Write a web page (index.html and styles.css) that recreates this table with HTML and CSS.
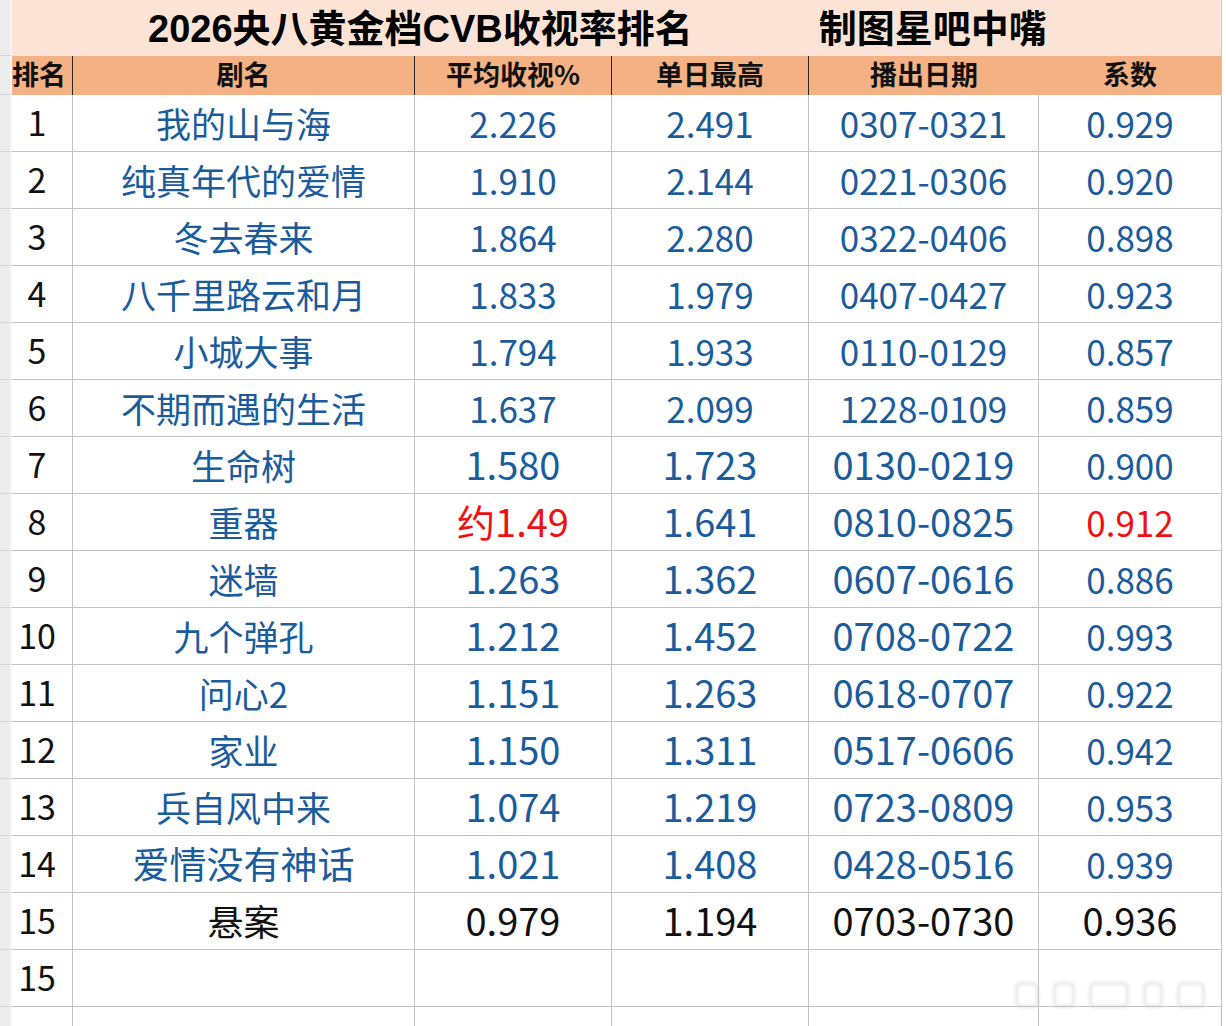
FILE: index.html
```html
<!DOCTYPE html>
<html lang="zh">
<head>
<meta charset="utf-8">
<link rel="stylesheet" href="styles.css">
</head>
<body>
<div class="sheet">
  <div class="gut"></div>
  <div class="title"><span class="t1">2026央八黄金档CVB收视率排名</span><span class="t2">制图星吧中嘴</span></div>

  <div class="gut"></div>
  <div class="hd dark first">排名</div><div class="hd dark">剧名</div><div class="hd dark">平均收视%</div><div class="hd dark">单日最高</div><div class="hd">播出日期</div><div class="hd last">系数</div>

  <div class="gut"></div>
  <div class="c rk">1</div><div class="c b nm">我的山与海</div><div class="c b">2.226</div><div class="c b">2.491</div><div class="c b">0307-0321</div><div class="c b">0.929</div>
  <div class="gut"></div>
  <div class="c rk">2</div><div class="c b nm">纯真年代的爱情</div><div class="c b">1.910</div><div class="c b">2.144</div><div class="c b">0221-0306</div><div class="c b">0.920</div>
  <div class="gut"></div>
  <div class="c rk">3</div><div class="c b nm">冬去春来</div><div class="c b">1.864</div><div class="c b">2.280</div><div class="c b">0322-0406</div><div class="c b">0.898</div>
  <div class="gut"></div>
  <div class="c rk">4</div><div class="c b nm">八千里路云和月</div><div class="c b">1.833</div><div class="c b">1.979</div><div class="c b">0407-0427</div><div class="c b">0.923</div>
  <div class="gut"></div>
  <div class="c rk">5</div><div class="c b nm">小城大事</div><div class="c b">1.794</div><div class="c b">1.933</div><div class="c b">0110-0129</div><div class="c b">0.857</div>
  <div class="gut"></div>
  <div class="c rk">6</div><div class="c b nm">不期而遇的生活</div><div class="c b">1.637</div><div class="c b">2.099</div><div class="c b">1228-0109</div><div class="c b">0.859</div>
  <div class="gut"></div>
  <div class="c rk">7</div><div class="c b nm">生命树</div><div class="c b lg">1.580</div><div class="c b lg">1.723</div><div class="c b lg">0130-0219</div><div class="c b">0.900</div>
  <div class="gut"></div>
  <div class="c rk">8</div><div class="c b nm">重器</div><div class="c r lg">约1.49</div><div class="c b lg">1.641</div><div class="c b lg">0810-0825</div><div class="c r">0.912</div>
  <div class="gut"></div>
  <div class="c rk">9</div><div class="c b nm">迷墙</div><div class="c b lg">1.263</div><div class="c b lg">1.362</div><div class="c b lg">0607-0616</div><div class="c b">0.886</div>
  <div class="gut"></div>
  <div class="c rk">10</div><div class="c b nm">九个弹孔</div><div class="c b lg">1.212</div><div class="c b lg">1.452</div><div class="c b lg">0708-0722</div><div class="c b">0.993</div>
  <div class="gut"></div>
  <div class="c rk">11</div><div class="c b nm">问心2</div><div class="c b lg">1.151</div><div class="c b lg">1.263</div><div class="c b lg">0618-0707</div><div class="c b">0.922</div>
  <div class="gut"></div>
  <div class="c rk">12</div><div class="c b nm">家业</div><div class="c b lg">1.150</div><div class="c b lg">1.311</div><div class="c b lg">0517-0606</div><div class="c b">0.942</div>
  <div class="gut"></div>
  <div class="c rk">13</div><div class="c b nm">兵自风中来</div><div class="c b lg">1.074</div><div class="c b lg">1.219</div><div class="c b lg">0723-0809</div><div class="c b">0.953</div>
  <div class="gut"></div>
  <div class="c rk">14</div><div class="c b nm lgn">爱情没有神话</div><div class="c b lg">1.021</div><div class="c b lg">1.408</div><div class="c b lg">0428-0516</div><div class="c b">0.939</div>
  <div class="gut"></div>
  <div class="c rk">15</div><div class="c k nm lgn2">悬案</div><div class="c k lg">0.979</div><div class="c k lg">1.194</div><div class="c k lg">0703-0730</div><div class="c k lg">0.936</div>
  <div class="gut"></div>
  <div class="c rk">15</div><div class="c"></div><div class="c"></div><div class="c"></div><div class="c"></div><div class="c"></div>
  <div class="gut"></div>
  <div class="c"></div><div class="c"></div><div class="c"></div><div class="c"></div><div class="c"></div><div class="c"></div>
</div>
<div class="wm"><span class="w1"></span><span class="w2"></span><span class="w3"></span><span class="w4"></span><span class="w5"></span></div>
</body>
</html>
```

FILE: styles.css
```css
html, body {
  margin: 0;
  padding: 0;
  background: #ffffff;
}
body {
  width: 1226px;
  height: 1026px;
  overflow: hidden;
  position: relative;
  font-family: "Noto Sans CJK SC", "Noto Sans", sans-serif;
}
.sheet {
  display: grid;
  grid-template-columns: 12px 61px 342px 197px 197px 230px 183px;
  grid-template-rows: 56px 39px;
  grid-auto-rows: 57px;
  width: 1222px;
}
.gut {
  background: #ececec;
  border-right: 2px solid #f6f6f6;
  border-bottom: 1px solid #d4d4d4;
  box-sizing: border-box;
}
.title {
  grid-column: 2 / 8;
  background: #fbe4d6;
  border-right: 1px solid #c8c8c8;
  box-sizing: border-box;
  display: flex;
  align-items: center;
  padding-left: 136px;
  padding-bottom: 5px;
  font-family: "Liberation Sans", "Noto Sans CJK SC", sans-serif;
  font-weight: 700;
  font-size: 38px;
  color: #000;
  white-space: nowrap;
}
.t2 {
  margin-left: 126px;
}
.hd {
  background: #f4b183;
  display: flex;
  align-items: center;
  justify-content: center;
  font-weight: 700;
  font-size: 27px;
  color: #111;
  box-sizing: border-box;
  padding-bottom: 4px;
  white-space: nowrap;
}
.hd.first {
  justify-content: flex-start;
}
.hd.dark {
  border-right: 1px solid #2a2a2a;
}
.hd.last {
  border-right: 1px solid #c8c8c8;
}
.c {
  display: flex;
  align-items: center;
  justify-content: center;
  border-right: 1px solid #c2c2c2;
  border-bottom: 1px solid #c2c2c2;
  box-sizing: border-box;
  font-size: 35px;
  line-height: 1;
  padding-bottom: 2px;
  white-space: nowrap;
}
.rk {
  color: #111;
  font-size: 34px;
  padding-right: 10px;
}
.b { color: #1a5c9c; }
.r { color: #ee1111; }
.k { color: #111; }
.lg { font-size: 38px; }
.nm { font-size: 35px; }
.nm.lgn { font-size: 37px; }
.nm.lgn2 { font-size: 36px; }
.wm {
  position: absolute;
  left: 1015px;
  top: 978px;
  width: 200px;
  height: 34px;
  display: flex;
  align-items: center;
  gap: 14px;
  filter: blur(1.5px);
  opacity: 0.45;
}
.wm span {
  display: block;
  border: 3px solid #c8c8c8;
  border-radius: 6px;
  height: 26px;
  box-sizing: border-box;
}
.w1 { width: 24px; }
.w2 { width: 22px; }
.w3 { width: 40px; }
.w4 { width: 20px; }
.w5 { width: 28px; }
```
